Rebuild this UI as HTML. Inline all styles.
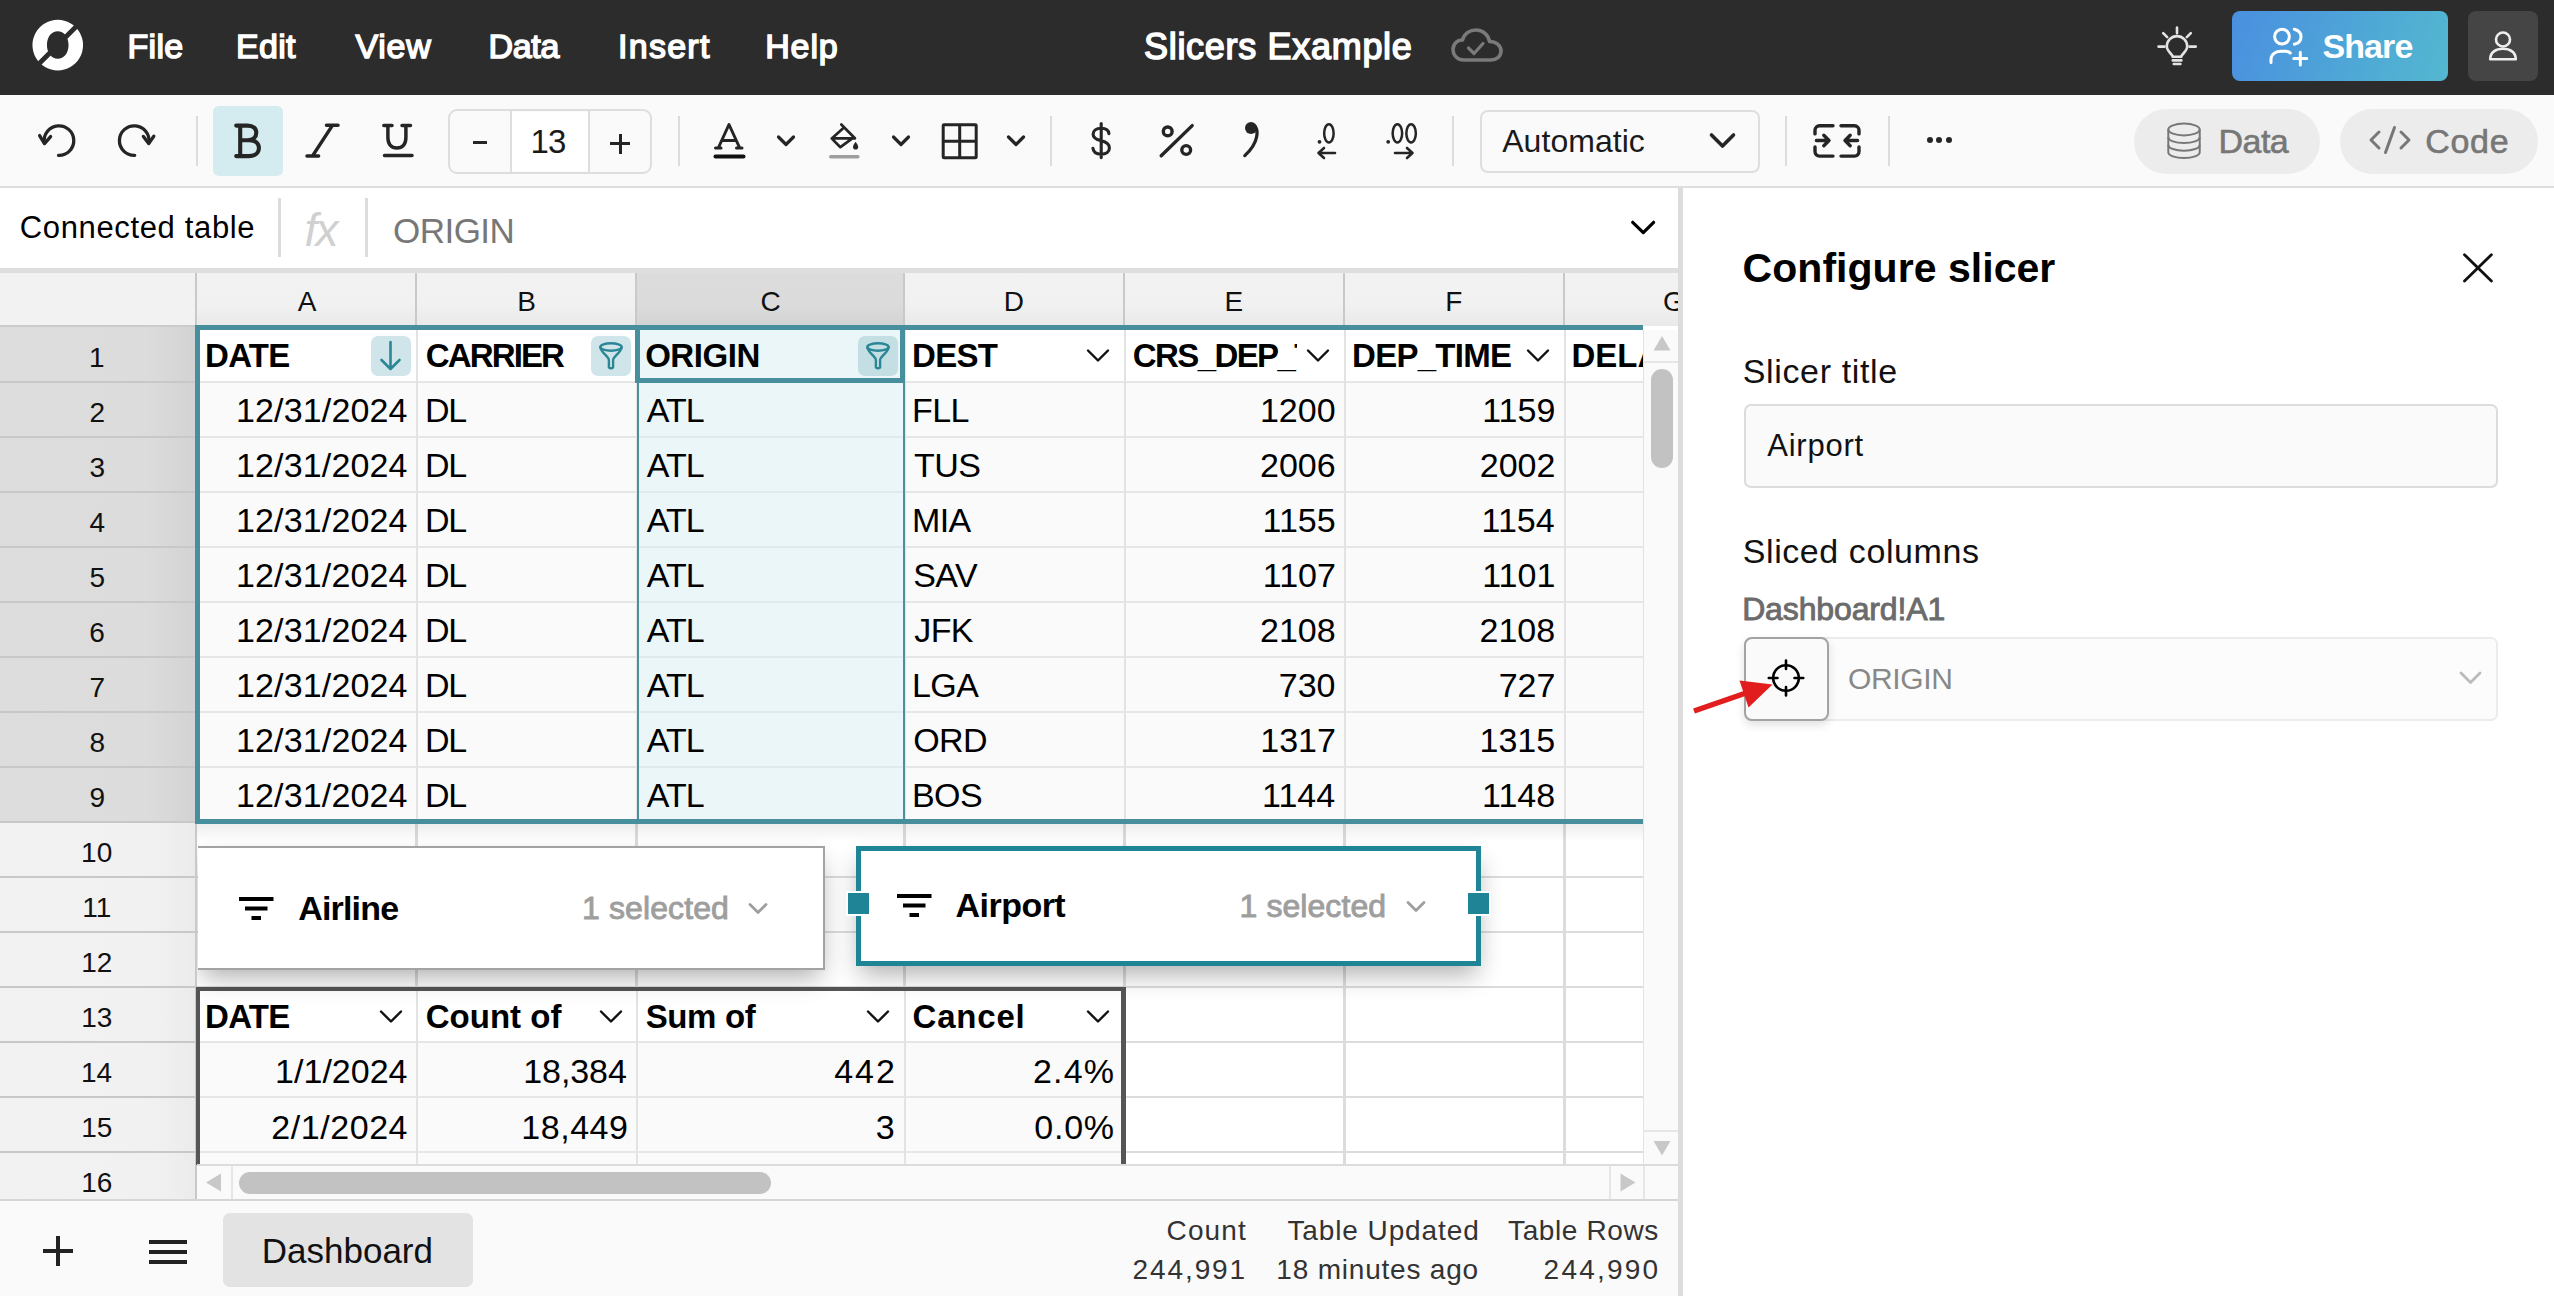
<!DOCTYPE html>
<html><head><meta charset="utf-8"><style>
html,body{margin:0;padding:0;}
body{width:2554px;height:1296px;overflow:hidden;position:relative;background:#fff;font-family:"Liberation Sans",sans-serif;}
body>div,body>svg{position:absolute;}
</style></head><body>
<div style="left:0px;top:0px;width:2554px;height:95px;background:#2c2c2c"></div>
<svg style="left:0px;top:0px;" width="100" height="95" viewBox="0 0 100 95"><path fill="#fff" fill-rule="evenodd" d="M57.75 19.8a25.3 25.3 0 1 0 0.01 0Z M57.75 31.2c-6.2 0-10.8 5.6-10.8 13.8s4.6 13.8 10.8 13.8 10.8-5.6 10.8-13.8-4.6-13.8-10.8-13.8Z"/><path d="M88 14.8 L27.5 75.3" stroke="#2c2c2c" stroke-width="4.8"/></svg>
<div style="left:127.46px;top:29.22px;font-size:34px;line-height:34px;font-weight:400;color:#fff;white-space:pre;letter-spacing:0.303px;-webkit-text-stroke:1.5px #fff;">File</div>
<div style="left:235.96px;top:29.22px;font-size:34px;line-height:34px;font-weight:400;color:#fff;white-space:pre;letter-spacing:0.315px;-webkit-text-stroke:1.5px #fff;">Edit</div>
<div style="left:355.61px;top:29.22px;font-size:34px;line-height:34px;font-weight:400;color:#fff;white-space:pre;letter-spacing:0.689px;-webkit-text-stroke:1.5px #fff;">View</div>
<div style="left:488.56px;top:29.22px;font-size:34px;line-height:34px;font-weight:400;color:#fff;white-space:pre;letter-spacing:-0.340px;-webkit-text-stroke:1.5px #fff;">Data</div>
<div style="left:618.02px;top:29.22px;font-size:34px;line-height:34px;font-weight:400;color:#fff;white-space:pre;letter-spacing:1.266px;-webkit-text-stroke:1.5px #fff;">Insert</div>
<div style="left:765.16px;top:29.22px;font-size:34px;line-height:34px;font-weight:400;color:#fff;white-space:pre;letter-spacing:0.893px;-webkit-text-stroke:1.5px #fff;">Help</div>
<div style="left:1144.03px;top:28.53px;font-size:36px;line-height:36px;font-weight:400;color:#fff;white-space:pre;letter-spacing:0.694px;-webkit-text-stroke:1.5px #fff;">Slicers Example</div>
<svg style="left:1450px;top:27px;" width="56" height="38" viewBox="0 0 56 38"><path d="M14 33 C6 33 3 27 3 22.5 C3 17 7 13 12.5 13 C14.5 6.5 20 3 26 3 C33 3 38.5 8 39.5 14.5 C46 14.5 51 18.5 51 24 C51 29.5 46.5 33 40.5 33 Z" fill="none" stroke="#7a7a7a" stroke-width="3.6" stroke-linejoin="round"/><path d="M18.5 21 L24 26.5 L33 16.5" fill="none" stroke="#7a7a7a" stroke-width="3.2" stroke-linecap="round" stroke-linejoin="round"/></svg>
<svg style="left:2155px;top:24px;" width="44" height="44" viewBox="0 0 44 44"><g fill="none" stroke="#e3e3e3" stroke-width="2.6" stroke-linecap="round" stroke-linejoin="round"><path d="M22 3.6 V9.2 M8.2 9.2 L12.2 13.2 M35.8 9.2 L31.8 13.2 M3.5 22.6 H9.5 M34.5 22.6 H40.8"/><path d="M17.8 32.8 C17.6 30.2 11.8 27.6 11.8 22.3 C11.8 16.6 16.4 12.1 22 12.1 C27.6 12.1 32.2 16.6 32.2 22.3 C32.2 27.6 26.4 30.2 26.2 32.8 Z"/><path d="M17.8 36.4 H26.4 M18.8 40 H25.4"/></g></svg>
<div style="left:2232px;top:11px;width:216px;height:70px;background:linear-gradient(110deg,#4a8fe0 0%,#4ea6d6 55%,#54b8d0 100%);border-radius:8px"></div>
<svg style="left:2267.5px;top:26px;" width="44" height="42" viewBox="0 0 44 42"><g fill="none" stroke="#fff" stroke-width="3" stroke-linecap="round"><circle cx="14" cy="10.6" r="7.4"/><path d="M26.3 3.2 C30.4 4.2 33 7 33 10.7 C33 14.4 30.4 17.3 26.3 18.2"/><path d="M3 36.6 V33.5 C3 28.5 7 25.3 12.5 25.3 H17.5 C19.5 25.3 21 25.9 22.3 27"/><path d="M32.3 26.2 V39 M25.8 32.6 H38.8"/></g></svg>
<div style="left:2322.41px;top:29.22px;font-size:34px;line-height:34px;font-weight:700;color:#fff;white-space:pre;letter-spacing:-0.886px;">Share</div>
<div style="left:2468px;top:11px;width:70px;height:70px;background:#454545;border-radius:8px"></div>
<svg style="left:2484px;top:28px;" width="38" height="36" viewBox="0 0 38 36"><g fill="none" stroke="#eee" stroke-width="2.6" stroke-linejoin="round"><circle cx="19" cy="11.5" r="7"/><path d="M6.2 31.2 C6.2 24.3 11.9 20.8 19 20.8 C26.1 20.8 31.8 24.3 31.8 31.2 Z"/></g></svg>
<div style="left:0px;top:95px;width:2554px;height:91px;background:#fafafa"></div>
<div style="left:0px;top:186px;width:2554px;height:2px;background:#dedede"></div>
<svg style="left:30px;top:115px;" width="140" height="50" viewBox="0 0 140 50"><g fill="none" stroke="#252525" stroke-width="3.3" stroke-linecap="round" stroke-linejoin="round"><path d="M28.5 40.4 A14.8 14.8 0 1 0 14.3 27.5"/><path d="M9.6 20.6 L14.5 28.6 L20.6 21.6"/><path d="M104.7 40.4 A14.8 14.8 0 1 1 118.9 27.5"/><path d="M113.4 21.4 L118.7 28.6 L123.8 21.2"/></g></svg>
<div style="left:196px;top:116px;width:2px;height:50px;background:#dcdcdc"></div>
<div style="left:213px;top:106px;width:70px;height:70px;background:#d4ebef;border-radius:6px"></div>
<svg style="left:225px;top:115px;" width="200" height="50" viewBox="0 0 200 50"><g fill="none" stroke="#252525" stroke-width="4.1" stroke-linecap="round" stroke-linejoin="round"><path d="M11.2 10.6 H22.5 C28.3 10.6 31.3 13.6 31.3 17.8 C31.3 22 28.3 25.2 22.5 25.2 H15.2 M15.2 10.6 V41.1 M11.2 41.1 H24 C30.3 41.1 33.9 37.6 33.9 33 C33.9 28.4 30.3 25.2 24 25.2 H15.2"/></g><g fill="none" stroke="#252525" stroke-width="3.5" stroke-linecap="round" stroke-linejoin="round"><path d="M101.5 10.3 H113 M107.3 10.6 L87.7 40.6 M82 40.9 H93.6"/><path d="M158.8 10.6 H167 M177 10.6 H185.5 M162.9 11 V22.5 C162.9 29.5 166.5 33 171.9 33 C177.3 33 180.9 29.5 180.9 22.5 V11 M159.5 40.6 H187"/></g></svg>
<div style="left:448px;top:109px;width:204px;height:65px;background:#fafafa;border:2px solid #dedede;border-radius:9px;box-sizing:border-box"></div>
<div style="left:511px;top:112px;width:78px;height:59px;background:#fff"></div>
<div style="left:510px;top:111px;width:2px;height:61px;background:#dedede"></div>
<div style="left:588px;top:111px;width:2px;height:61px;background:#dedede"></div>
<div style="left:473px;top:141px;width:14px;height:3px;background:#252525"></div>
<div style="left:530.49px;top:125.27px;font-size:33px;line-height:33px;font-weight:400;color:#1a1a1a;white-space:pre;letter-spacing:-0.769px;">13</div>
<div style="left:610px;top:142px;width:20px;height:3px;background:#252525"></div>
<div style="left:618.5px;top:133.5px;width:3px;height:20px;background:#252525"></div>
<div style="left:678px;top:116px;width:2px;height:50px;background:#dcdcdc"></div>
<svg style="left:710px;top:120px;" width="40" height="42" viewBox="0 0 40 42"><g fill="none" stroke="#252525" stroke-width="3" stroke-linecap="round" stroke-linejoin="round"><path d="M8.5 27.5 L19 4.5 L29.5 27.5 M12 20.5 H26 M5.5 28 H11 M26.5 28 H32"/></g><rect x="3.5" y="34.5" width="32" height="4" rx="2" fill="#111"/></svg>
<svg style="left:775.5px;top:134px;" width="20" height="15" viewBox="0 0 20 15"><path d="M2.5 3 L10 10.5 L17.5 3" fill="none" stroke="#252525" stroke-width="3.2" stroke-linecap="round" stroke-linejoin="round"/></svg>
<svg style="left:826px;top:120px;" width="38" height="42" viewBox="0 0 38 42"><g fill="none" stroke="#252525" stroke-width="2.7" stroke-linejoin="round" stroke-linecap="round"><path d="M15.3 4.5 L28.9 18.3 M16.6 8.8 L5.8 18.6 L14.4 27.2 L26 18.6 M5.8 18.4 H28.9"/></g><path d="M29.6 21.8 C31 23.8 32.2 25.6 32.2 26.9 C32.2 28.5 31 29.5 29.6 29.5 C28.2 29.5 27 28.5 27 26.9 C27 25.6 28.2 23.8 29.6 21.8Z" fill="#252525"/><rect x="3" y="35" width="30.6" height="3.6" rx="1.8" fill="#9e9e9e"/></svg>
<svg style="left:890.5px;top:134px;" width="20" height="15" viewBox="0 0 20 15"><path d="M2.5 3 L10 10.5 L17.5 3" fill="none" stroke="#252525" stroke-width="3.2" stroke-linecap="round" stroke-linejoin="round"/></svg>
<svg style="left:939px;top:120px;" width="42" height="40" viewBox="0 0 42 40"><g fill="none" stroke="#252525" stroke-width="3" stroke-linejoin="round"><rect x="4.2" y="4.8" width="33" height="33" rx="0.8"/><path d="M20.7 4.8 V37.8 M4.2 21.3 H37.2"/></g></svg>
<svg style="left:1005.5px;top:134px;" width="20" height="15" viewBox="0 0 20 15"><path d="M2.5 3 L10 10.5 L17.5 3" fill="none" stroke="#252525" stroke-width="3.2" stroke-linecap="round" stroke-linejoin="round"/></svg>
<div style="left:1050px;top:116px;width:2px;height:50px;background:#dcdcdc"></div>
<svg style="left:1085px;top:118px;" width="34" height="44" viewBox="0 0 34 44"><g fill="none" stroke="#252525" stroke-width="3.1" stroke-linecap="round" stroke-linejoin="round"><path d="M16.2 5.6 V39.6 M23.9 15.6 C23.6 12 20.8 10.2 16.2 10.2 C11.2 10.2 8.1 12.6 8.1 16.3 C8.1 20.3 11.6 21.7 16.2 22.8 C21 23.9 24.4 25.8 24.4 30 C24.4 33.8 21.3 36.2 16.2 36.2 C11.4 36.2 8.3 34.2 7.9 30.2"/></g></svg>
<svg style="left:1158px;top:120px;" width="40" height="40" viewBox="0 0 40 40"><g fill="none" stroke="#252525" stroke-width="3.4" stroke-linecap="round"><path d="M3.2 35.8 L34.2 5.6"/><circle cx="9.7" cy="11.4" r="4.4"/><circle cx="28.2" cy="30" r="4.4"/></g></svg>
<svg style="left:1240px;top:120px;" width="22" height="40" viewBox="0 0 22 40"><path d="M15.2 6.5 C17.5 9.5 17.4 13 16.6 17 C15.3 23.5 11.5 29.5 4.8 35.6" fill="none" stroke="#252525" stroke-width="3.3" stroke-linecap="round"/><circle cx="11" cy="8.1" r="6" fill="#252525"/></svg>
<svg style="left:1314px;top:120px;" width="28" height="42" viewBox="0 0 28 42"><ellipse cx="14.9" cy="13.3" rx="4.75" ry="9.1" fill="none" stroke="#252525" stroke-width="2.5"/><circle cx="5.5" cy="21.8" r="1.9" fill="#252525"/><g fill="none" stroke="#252525" stroke-width="2.6" stroke-linecap="round" stroke-linejoin="round"><path d="M4.5 33 H21 M10 28 L4.5 33 L10 38"/></g></svg>
<svg style="left:1384px;top:120px;" width="38" height="42" viewBox="0 0 38 42"><ellipse cx="13.4" cy="13.3" rx="4.75" ry="9.1" fill="none" stroke="#252525" stroke-width="2.5"/><ellipse cx="27.1" cy="13.3" rx="4.75" ry="9.1" fill="none" stroke="#252525" stroke-width="2.5"/><circle cx="4.2" cy="21.8" r="1.9" fill="#252525"/><g fill="none" stroke="#252525" stroke-width="2.6" stroke-linecap="round" stroke-linejoin="round"><path d="M11 33 H28.5 M23 28 L28.5 33 L23 38"/></g></svg>
<div style="left:1452px;top:116px;width:2px;height:50px;background:#dcdcdc"></div>
<div style="left:1480px;top:110px;width:280px;height:63px;background:#fafafa;border:2px solid #dedede;border-radius:8px;box-sizing:border-box"></div>
<div style="left:1502.24px;top:124.91px;font-size:32px;line-height:32px;font-weight:400;color:#1a1a1a;white-space:pre;letter-spacing:0.041px;">Automatic</div>
<svg style="left:1708px;top:131px;" width="30" height="22" viewBox="0 0 30 22"><path d="M3.5 4 L14.5 15 L25.5 4" fill="none" stroke="#252525" stroke-width="3.6" stroke-linecap="round" stroke-linejoin="round"/></svg>
<div style="left:1785px;top:116px;width:2px;height:50px;background:#dcdcdc"></div>
<svg style="left:1810px;top:121px;" width="54" height="40" viewBox="0 0 54 40"><g fill="none" stroke="#252525" stroke-width="3.4" stroke-linecap="round" stroke-linejoin="round"><path d="M23 4.8 H9.5 C7 4.8 5 6.8 5 9.3 V12.9 M5 26 V30.6 C5 33.1 7 35.1 9.5 35.1 H23"/><path d="M31 4.8 H44.5 C47 4.8 49 6.8 49 9.3 V12.9 M49 26 V30.6 C49 33.1 47 35.1 44.5 35.1 H31"/><path d="M6.4 19.5 H18.8 M13.8 14.2 L19 19.5 L13.8 24.8"/><path d="M47.6 19.5 H35.2 M40.2 14.2 L35 19.5 L40.2 24.8"/></g></svg>
<div style="left:1888px;top:116px;width:2px;height:50px;background:#dcdcdc"></div>
<div style="left:1927.2px;top:137.4px;width:6px;height:6px;background:#252525;border-radius:50%"></div>
<div style="left:1936.4px;top:137.4px;width:6px;height:6px;background:#252525;border-radius:50%"></div>
<div style="left:1945.7px;top:137.4px;width:6px;height:6px;background:#252525;border-radius:50%"></div>
<div style="left:2134px;top:109px;width:186px;height:65px;background:#ececec;border-radius:33px"></div>
<svg style="left:2164px;top:120px;" width="40" height="42" viewBox="0 0 40 42"><g fill="none" stroke="#777" stroke-width="2"><ellipse cx="20" cy="9.5" rx="15.7" ry="5.9"/><path d="M4.3 9.5 V32.2 C4.3 35.5 11.3 38 20 38 C28.7 38 35.7 35.5 35.7 32.2 V9.5"/><path d="M4.3 17.2 C4.3 20.5 11.3 23 20 23 C28.7 23 35.7 20.5 35.7 17.2"/><path d="M4.3 24.9 C4.3 28.2 11.3 30.7 20 30.7 C28.7 30.7 35.7 28.2 35.7 24.9"/></g></svg>
<div style="left:2218.51px;top:124.02px;font-size:34px;line-height:34px;font-weight:400;color:#777;white-space:pre;letter-spacing:-0.540px;-webkit-text-stroke:0.6px #777;">Data</div>
<div style="left:2340px;top:109px;width:198px;height:65px;background:#ececec;border-radius:33px"></div>
<svg style="left:2367px;top:124px;" width="46" height="32" viewBox="0 0 46 32"><g fill="none" stroke="#777" stroke-width="3" stroke-linecap="round" stroke-linejoin="round"><path d="M12 8 L4 16 L12 24 M34 8 L42 16 L34 24 M27.5 3.5 L18.5 28.5"/></g></svg>
<div style="left:2425.30px;top:124.02px;font-size:34px;line-height:34px;font-weight:400;color:#777;white-space:pre;letter-spacing:0.679px;-webkit-text-stroke:0.6px #777;">Code</div>
<div style="left:0px;top:188px;width:1679px;height:80px;background:#fff"></div><div style="left:0px;top:268px;width:1679px;height:5px;background:#dedede"></div><div style="left:19.75px;top:212.46px;font-size:31px;line-height:31px;font-weight:400;color:#000;white-space:pre;letter-spacing:0.646px;">Connected table</div><div style="left:278px;top:198px;width:3px;height:59px;background:#dcdcdc"></div><div style="left:304.38px;top:207.06px;font-size:46px;line-height:46px;font-weight:400;color:#d0d0d0;white-space:pre;letter-spacing:-1.704px;font-style:italic;">fx</div><div style="left:365px;top:198px;width:3px;height:59px;background:#dcdcdc"></div><div style="left:392.96px;top:213.47px;font-size:35px;line-height:35px;font-weight:400;color:#777;white-space:pre;letter-spacing:-0.509px;">ORIGIN</div><svg style="left:1629px;top:218px;" width="30" height="20" viewBox="0 0 30 20"><path d="M3.7 4.3 L14.3 14.6 L24.6 4.3" fill="none" stroke="#000" stroke-width="3.2" stroke-linecap="round" stroke-linejoin="round"/></svg><div style="left:0px;top:273px;width:1679px;height:53px;background:linear-gradient(#f2f2f2 0%,#f1f1f1 60%,#e9e9e9 100%)"></div><div style="left:637px;top:273px;width:266px;height:53px;background:linear-gradient(#dcdcdc 0%,#dbdbdb 60%,#d3d3d3 100%)"></div><div style="left:0px;top:273px;width:195px;height:53px;background:#f2f2f2"></div><div style="left:195px;top:273px;width:2px;height:53px;background:#c9c9c9"></div><div style="left:415px;top:273px;width:2px;height:53px;background:#c9c9c9"></div><div style="left:635px;top:273px;width:2px;height:53px;background:#c9c9c9"></div><div style="left:903px;top:273px;width:2px;height:53px;background:#c9c9c9"></div><div style="left:1123px;top:273px;width:2px;height:53px;background:#c9c9c9"></div><div style="left:1343px;top:273px;width:2px;height:53px;background:#c9c9c9"></div><div style="left:1563px;top:273px;width:2px;height:53px;background:#c9c9c9"></div><div style="left:0px;top:325px;width:197px;height:2px;background:#cbcbcb"></div><div style="left:297.66px;top:288.00px;font-size:28px;line-height:28px;font-weight:400;color:#111;white-space:pre;letter-spacing:0.000px;">A</div><div style="left:517.24px;top:288.00px;font-size:28px;line-height:28px;font-weight:400;color:#111;white-space:pre;letter-spacing:0.000px;">B</div><div style="left:760.42px;top:288.00px;font-size:28px;line-height:28px;font-weight:400;color:#111;white-space:pre;letter-spacing:0.000px;">C</div><div style="left:1003.70px;top:288.00px;font-size:28px;line-height:28px;font-weight:400;color:#111;white-space:pre;letter-spacing:0.000px;">D</div><div style="left:1224.62px;top:288.00px;font-size:28px;line-height:28px;font-weight:400;color:#111;white-space:pre;letter-spacing:0.000px;">E</div><div style="left:1445.16px;top:288.00px;font-size:28px;line-height:28px;font-weight:400;color:#111;white-space:pre;letter-spacing:0.000px;">F</div><div style="left:1663.00px;top:288.00px;font-size:28px;line-height:28px;font-weight:400;color:#111;white-space:pre;letter-spacing:0.000px;">G</div><div style="left:0px;top:327px;width:195px;height:496px;background:linear-gradient(90deg,#dddddd 0%,#dcdcdc 75%,#d3d3d3 100%)"></div><div style="left:0px;top:823px;width:195px;height:377px;background:linear-gradient(90deg,#f2f2f2 0%,#f1f1f1 80%,#ebebeb 100%)"></div><div style="left:0px;top:380.5px;width:195px;height:2.5px;background:#c8c8c8"></div><div style="left:0px;top:435.5px;width:195px;height:2.5px;background:#c8c8c8"></div><div style="left:0px;top:490.5px;width:195px;height:2.5px;background:#c8c8c8"></div><div style="left:0px;top:545.5px;width:195px;height:2.5px;background:#c8c8c8"></div><div style="left:0px;top:600.5px;width:195px;height:2.5px;background:#c8c8c8"></div><div style="left:0px;top:655.5px;width:195px;height:2.5px;background:#c8c8c8"></div><div style="left:0px;top:710.5px;width:195px;height:2.5px;background:#c8c8c8"></div><div style="left:0px;top:765.5px;width:195px;height:2.5px;background:#c8c8c8"></div><div style="left:0px;top:820.5px;width:195px;height:2.5px;background:#c8c8c8"></div><div style="left:0px;top:875.5px;width:195px;height:2.5px;background:#c8c8c8"></div><div style="left:0px;top:930.5px;width:195px;height:2.5px;background:#c8c8c8"></div><div style="left:0px;top:985.5px;width:195px;height:2.5px;background:#c8c8c8"></div><div style="left:0px;top:1040.5px;width:195px;height:2.5px;background:#c8c8c8"></div><div style="left:0px;top:1095.5px;width:195px;height:2.5px;background:#c8c8c8"></div><div style="left:0px;top:1150.5px;width:195px;height:2.5px;background:#c8c8c8"></div><div style="left:195px;top:327px;width:2px;height:873px;background:#c9c9c9"></div><div style="left:89.02px;top:344.00px;font-size:28px;line-height:28px;font-weight:400;color:#111;white-space:pre;letter-spacing:0.000px;">1</div><div style="left:89.42px;top:399.00px;font-size:28px;line-height:28px;font-weight:400;color:#111;white-space:pre;letter-spacing:0.000px;">2</div><div style="left:89.49px;top:454.00px;font-size:28px;line-height:28px;font-weight:400;color:#111;white-space:pre;letter-spacing:0.000px;">3</div><div style="left:89.50px;top:509.00px;font-size:28px;line-height:28px;font-weight:400;color:#111;white-space:pre;letter-spacing:0.000px;">4</div><div style="left:89.44px;top:564.00px;font-size:28px;line-height:28px;font-weight:400;color:#111;white-space:pre;letter-spacing:0.000px;">5</div><div style="left:89.32px;top:619.00px;font-size:28px;line-height:28px;font-weight:400;color:#111;white-space:pre;letter-spacing:0.000px;">6</div><div style="left:89.40px;top:674.00px;font-size:28px;line-height:28px;font-weight:400;color:#111;white-space:pre;letter-spacing:0.000px;">7</div><div style="left:89.42px;top:729.00px;font-size:28px;line-height:28px;font-weight:400;color:#111;white-space:pre;letter-spacing:0.000px;">8</div><div style="left:89.42px;top:784.00px;font-size:28px;line-height:28px;font-weight:400;color:#111;white-space:pre;letter-spacing:0.000px;">9</div><div style="left:81.11px;top:839.00px;font-size:28px;line-height:28px;font-weight:400;color:#111;white-space:pre;letter-spacing:0.000px;">10</div><div style="left:82.28px;top:894.00px;font-size:28px;line-height:28px;font-weight:400;color:#111;white-space:pre;letter-spacing:0.000px;">11</div><div style="left:81.27px;top:949.00px;font-size:28px;line-height:28px;font-weight:400;color:#111;white-space:pre;letter-spacing:0.000px;">12</div><div style="left:81.17px;top:1004.00px;font-size:28px;line-height:28px;font-weight:400;color:#111;white-space:pre;letter-spacing:0.000px;">13</div><div style="left:80.97px;top:1059.00px;font-size:28px;line-height:28px;font-weight:400;color:#111;white-space:pre;letter-spacing:0.000px;">14</div><div style="left:81.16px;top:1114.00px;font-size:28px;line-height:28px;font-weight:400;color:#111;white-space:pre;letter-spacing:0.000px;">15</div><div style="left:81.17px;top:1169.00px;font-size:28px;line-height:28px;font-weight:400;color:#111;white-space:pre;letter-spacing:0.000px;">16</div><div style="left:197px;top:327px;width:1446px;height:838px;background:#fff"></div><div style="left:197px;top:820.5px;width:1446px;height:2.5px;background:#dcdcdc"></div><div style="left:197px;top:875.5px;width:1446px;height:2.5px;background:#dcdcdc"></div><div style="left:197px;top:930.5px;width:1446px;height:2.5px;background:#dcdcdc"></div><div style="left:197px;top:985.5px;width:1446px;height:2.5px;background:#dcdcdc"></div><div style="left:197px;top:1040.5px;width:1446px;height:2.5px;background:#dcdcdc"></div><div style="left:197px;top:1095.5px;width:1446px;height:2.5px;background:#dcdcdc"></div><div style="left:197px;top:1150.5px;width:1446px;height:2.5px;background:#dcdcdc"></div><div style="left:415px;top:823px;width:2.5px;height:342px;background:#dcdcdc"></div><div style="left:635px;top:823px;width:2.5px;height:342px;background:#dcdcdc"></div><div style="left:903px;top:823px;width:2.5px;height:342px;background:#dcdcdc"></div><div style="left:1123px;top:823px;width:2.5px;height:342px;background:#dcdcdc"></div><div style="left:1343px;top:823px;width:2.5px;height:342px;background:#dcdcdc"></div><div style="left:1563px;top:823px;width:2.5px;height:342px;background:#dcdcdc"></div><div style="left:200px;top:330px;width:1443px;height:51px;background:#fff"></div><div style="left:200px;top:382px;width:1443px;height:437px;background:#fafafa"></div><div style="left:200px;top:380.5px;width:1443px;height:2px;background:#e6e6e6"></div><div style="left:200px;top:435.5px;width:1443px;height:2px;background:#e6e6e6"></div><div style="left:200px;top:490.5px;width:1443px;height:2px;background:#e6e6e6"></div><div style="left:200px;top:545.5px;width:1443px;height:2px;background:#e6e6e6"></div><div style="left:200px;top:600.5px;width:1443px;height:2px;background:#e6e6e6"></div><div style="left:200px;top:655.5px;width:1443px;height:2px;background:#e6e6e6"></div><div style="left:200px;top:710.5px;width:1443px;height:2px;background:#e6e6e6"></div><div style="left:200px;top:765.5px;width:1443px;height:2px;background:#e6e6e6"></div><div style="left:415.5px;top:330px;width:2px;height:489px;background:#e3e3e3"></div><div style="left:635.5px;top:330px;width:2px;height:489px;background:#e3e3e3"></div><div style="left:903.5px;top:330px;width:2px;height:489px;background:#e3e3e3"></div><div style="left:1123.5px;top:330px;width:2px;height:489px;background:#e3e3e3"></div><div style="left:1343.5px;top:330px;width:2px;height:489px;background:#e3e3e3"></div><div style="left:1563.5px;top:330px;width:2px;height:489px;background:#e3e3e3"></div><div style="left:637px;top:330px;width:267px;height:489px;background:#eaf6f8"></div><div style="left:637px;top:382px;width:2px;height:437px;background:#4a919d"></div><div style="left:902.5px;top:382px;width:2px;height:437px;background:#4a919d"></div><div style="left:639px;top:435.5px;width:263.5px;height:2px;background:#dfeaec"></div><div style="left:639px;top:490.5px;width:263.5px;height:2px;background:#dfeaec"></div><div style="left:639px;top:545.5px;width:263.5px;height:2px;background:#dfeaec"></div><div style="left:639px;top:600.5px;width:263.5px;height:2px;background:#dfeaec"></div><div style="left:639px;top:655.5px;width:263.5px;height:2px;background:#dfeaec"></div><div style="left:639px;top:710.5px;width:263.5px;height:2px;background:#dfeaec"></div><div style="left:639px;top:765.5px;width:263.5px;height:2px;background:#dfeaec"></div><div style="left:197px;top:823.5px;width:1446px;height:18px;background:linear-gradient(rgba(0,0,0,0.07),rgba(0,0,0,0))"></div><div style="left:195px;top:325px;width:1448px;height:5.3px;background:#478f9c"></div><div style="left:195px;top:818.5px;width:1448px;height:5px;background:#478f9c"></div><div style="left:195px;top:325px;width:5px;height:498.5px;background:#478f9c"></div><div style="left:635.3px;top:325px;width:269.7px;height:57.6px;border:5px solid #478f9c;box-sizing:border-box"></div><div style="left:205.09px;top:339.27px;font-size:33px;line-height:33px;font-weight:700;color:#000;white-space:pre;letter-spacing:-0.729px;">DATE</div><div style="left:425.75px;top:339.27px;font-size:33px;line-height:33px;font-weight:700;color:#000;white-space:pre;letter-spacing:-1.856px;">CARRIER</div><div style="left:645.15px;top:339.27px;font-size:33px;line-height:33px;font-weight:700;color:#000;white-space:pre;letter-spacing:-0.450px;">ORIGIN</div><div style="left:911.99px;top:339.27px;font-size:33px;line-height:33px;font-weight:700;color:#000;white-space:pre;letter-spacing:-0.679px;">DEST</div><div style="left:1132.75px;top:339.27px;font-size:33px;line-height:33px;font-weight:700;color:#000;white-space:pre;letter-spacing:-1.583px;width:164.25px;overflow:hidden;">CRS_DEP_T</div><div style="left:1352.09px;top:339.27px;font-size:33px;line-height:33px;font-weight:700;color:#000;white-space:pre;letter-spacing:-0.734px;">DEP_TIME</div><div style="left:1571.49px;top:339.27px;font-size:33px;line-height:33px;font-weight:700;color:#000;white-space:pre;letter-spacing:0.000px;">DELAY</div><div style="left:371px;top:335.5px;width:40px;height:40px;background:#cfe5ea;border-radius:7px"></div><svg style="left:371px;top:335.5px;" width="40" height="40" viewBox="0 0 40 40"><g fill="none" stroke="#2b8696" stroke-width="2.6" stroke-linecap="round" stroke-linejoin="round"><path d="M19.5 6 V33 M10.5 24 L19.5 33 L28.5 24"/></g></svg><div style="left:591px;top:335.5px;width:40px;height:40px;background:#cfe5ea;border-radius:7px"></div><svg style="left:591px;top:335.5px;" width="40" height="40" viewBox="0 0 40 40"><g fill="none" stroke="#2b8696" stroke-width="2.4" stroke-linecap="round" stroke-linejoin="round"><ellipse cx="20" cy="11" rx="10.6" ry="3.7"/><path d="M9.4 11.3 C10 16.8 17.9 20.5 17.9 24 V31 C17.9 32.6 22.1 32.6 22.1 31 V24 C22.1 20.5 30 16.8 30.6 11.3"/></g></svg><div style="left:858px;top:335.5px;width:40px;height:40px;background:#c3dfe4;border-radius:7px"></div><svg style="left:858px;top:335.5px;" width="40" height="40" viewBox="0 0 40 40"><g fill="none" stroke="#2b8696" stroke-width="2.4" stroke-linecap="round" stroke-linejoin="round"><ellipse cx="20" cy="11" rx="10.6" ry="3.7"/><path d="M9.4 11.3 C10 16.8 17.9 20.5 17.9 24 V31 C17.9 32.6 22.1 32.6 22.1 31 V24 C22.1 20.5 30 16.8 30.6 11.3"/></g></svg><svg style="left:1086px;top:348px;" width="24" height="16" viewBox="0 0 24 16"><path d="M2 2.5 L12 12.5 L22 2.5" fill="none" stroke="#111" stroke-width="2.4" stroke-linecap="round" stroke-linejoin="round"/></svg><svg style="left:1306px;top:348px;" width="24" height="16" viewBox="0 0 24 16"><path d="M2 2.5 L12 12.5 L22 2.5" fill="none" stroke="#111" stroke-width="2.4" stroke-linecap="round" stroke-linejoin="round"/></svg><svg style="left:1526px;top:348px;" width="24" height="16" viewBox="0 0 24 16"><path d="M2 2.5 L12 12.5 L22 2.5" fill="none" stroke="#111" stroke-width="2.4" stroke-linecap="round" stroke-linejoin="round"/></svg><div style="left:236.02px;top:393.42px;font-size:34px;line-height:34px;font-weight:400;color:#000;white-space:pre;letter-spacing:0.144px;">12/31/2024</div><div style="left:424.91px;top:393.42px;font-size:34px;line-height:34px;font-weight:400;color:#000;white-space:pre;letter-spacing:-1.242px;">DL</div><div style="left:646.83px;top:393.42px;font-size:34px;line-height:34px;font-weight:400;color:#000;white-space:pre;letter-spacing:-1.025px;">ATL</div><div style="left:912.01px;top:393.42px;font-size:34px;line-height:34px;font-weight:400;color:#000;white-space:pre;letter-spacing:-0.600px;">FLL</div><div style="left:1259.91px;top:393.42px;font-size:34px;line-height:34px;font-weight:400;color:#000;white-space:pre;letter-spacing:0.000px;">1200</div><div style="left:1482.20px;top:393.42px;font-size:34px;line-height:34px;font-weight:400;color:#000;white-space:pre;letter-spacing:0.000px;">1159</div><div style="left:236.02px;top:448.42px;font-size:34px;line-height:34px;font-weight:400;color:#000;white-space:pre;letter-spacing:0.144px;">12/31/2024</div><div style="left:424.91px;top:448.42px;font-size:34px;line-height:34px;font-weight:400;color:#000;white-space:pre;letter-spacing:-1.242px;">DL</div><div style="left:646.83px;top:448.42px;font-size:34px;line-height:34px;font-weight:400;color:#000;white-space:pre;letter-spacing:-1.025px;">ATL</div><div style="left:914.05px;top:448.42px;font-size:34px;line-height:34px;font-weight:400;color:#000;white-space:pre;letter-spacing:-0.600px;">TUS</div><div style="left:1260.05px;top:448.42px;font-size:34px;line-height:34px;font-weight:400;color:#000;white-space:pre;letter-spacing:0.000px;">2006</div><div style="left:1479.78px;top:448.42px;font-size:34px;line-height:34px;font-weight:400;color:#000;white-space:pre;letter-spacing:0.000px;">2002</div><div style="left:236.02px;top:503.42px;font-size:34px;line-height:34px;font-weight:400;color:#000;white-space:pre;letter-spacing:0.144px;">12/31/2024</div><div style="left:424.91px;top:503.42px;font-size:34px;line-height:34px;font-weight:400;color:#000;white-space:pre;letter-spacing:-1.242px;">DL</div><div style="left:646.83px;top:503.42px;font-size:34px;line-height:34px;font-weight:400;color:#000;white-space:pre;letter-spacing:-1.025px;">ATL</div><div style="left:912.01px;top:503.42px;font-size:34px;line-height:34px;font-weight:400;color:#000;white-space:pre;letter-spacing:-0.600px;">MIA</div><div style="left:1262.53px;top:503.42px;font-size:34px;line-height:34px;font-weight:400;color:#000;white-space:pre;letter-spacing:0.000px;">1155</div><div style="left:1481.59px;top:503.42px;font-size:34px;line-height:34px;font-weight:400;color:#000;white-space:pre;letter-spacing:0.000px;">1154</div><div style="left:236.02px;top:558.42px;font-size:34px;line-height:34px;font-weight:400;color:#000;white-space:pre;letter-spacing:0.144px;">12/31/2024</div><div style="left:424.91px;top:558.42px;font-size:34px;line-height:34px;font-weight:400;color:#000;white-space:pre;letter-spacing:-1.242px;">DL</div><div style="left:646.83px;top:558.42px;font-size:34px;line-height:34px;font-weight:400;color:#000;white-space:pre;letter-spacing:-1.025px;">ATL</div><div style="left:913.27px;top:558.42px;font-size:34px;line-height:34px;font-weight:400;color:#000;white-space:pre;letter-spacing:-0.600px;">SAV</div><div style="left:1262.80px;top:558.42px;font-size:34px;line-height:34px;font-weight:400;color:#000;white-space:pre;letter-spacing:0.000px;">1107</div><div style="left:1482.23px;top:558.42px;font-size:34px;line-height:34px;font-weight:400;color:#000;white-space:pre;letter-spacing:0.000px;">1101</div><div style="left:236.02px;top:613.42px;font-size:34px;line-height:34px;font-weight:400;color:#000;white-space:pre;letter-spacing:0.144px;">12/31/2024</div><div style="left:424.91px;top:613.42px;font-size:34px;line-height:34px;font-weight:400;color:#000;white-space:pre;letter-spacing:-1.242px;">DL</div><div style="left:646.83px;top:613.42px;font-size:34px;line-height:34px;font-weight:400;color:#000;white-space:pre;letter-spacing:-1.025px;">ATL</div><div style="left:914.29px;top:613.42px;font-size:34px;line-height:34px;font-weight:400;color:#000;white-space:pre;letter-spacing:-0.600px;">JFK</div><div style="left:1260.05px;top:613.42px;font-size:34px;line-height:34px;font-weight:400;color:#000;white-space:pre;letter-spacing:0.000px;">2108</div><div style="left:1479.55px;top:613.42px;font-size:34px;line-height:34px;font-weight:400;color:#000;white-space:pre;letter-spacing:0.000px;">2108</div><div style="left:236.02px;top:668.42px;font-size:34px;line-height:34px;font-weight:400;color:#000;white-space:pre;letter-spacing:0.144px;">12/31/2024</div><div style="left:424.91px;top:668.42px;font-size:34px;line-height:34px;font-weight:400;color:#000;white-space:pre;letter-spacing:-1.242px;">DL</div><div style="left:646.83px;top:668.42px;font-size:34px;line-height:34px;font-weight:400;color:#000;white-space:pre;letter-spacing:-1.025px;">ATL</div><div style="left:912.01px;top:668.42px;font-size:34px;line-height:34px;font-weight:400;color:#000;white-space:pre;letter-spacing:-0.600px;">LGA</div><div style="left:1278.81px;top:668.42px;font-size:34px;line-height:34px;font-weight:400;color:#000;white-space:pre;letter-spacing:0.000px;">730</div><div style="left:1498.69px;top:668.42px;font-size:34px;line-height:34px;font-weight:400;color:#000;white-space:pre;letter-spacing:0.000px;">727</div><div style="left:236.02px;top:723.42px;font-size:34px;line-height:34px;font-weight:400;color:#000;white-space:pre;letter-spacing:0.144px;">12/31/2024</div><div style="left:424.91px;top:723.42px;font-size:34px;line-height:34px;font-weight:400;color:#000;white-space:pre;letter-spacing:-1.242px;">DL</div><div style="left:646.83px;top:723.42px;font-size:34px;line-height:34px;font-weight:400;color:#000;white-space:pre;letter-spacing:-1.025px;">ATL</div><div style="left:913.20px;top:723.42px;font-size:34px;line-height:34px;font-weight:400;color:#000;white-space:pre;letter-spacing:-0.600px;">ORD</div><div style="left:1260.28px;top:723.42px;font-size:34px;line-height:34px;font-weight:400;color:#000;white-space:pre;letter-spacing:0.000px;">1317</div><div style="left:1479.51px;top:723.42px;font-size:34px;line-height:34px;font-weight:400;color:#000;white-space:pre;letter-spacing:0.000px;">1315</div><div style="left:236.02px;top:778.42px;font-size:34px;line-height:34px;font-weight:400;color:#000;white-space:pre;letter-spacing:0.144px;">12/31/2024</div><div style="left:424.91px;top:778.42px;font-size:34px;line-height:34px;font-weight:400;color:#000;white-space:pre;letter-spacing:-1.242px;">DL</div><div style="left:646.83px;top:778.42px;font-size:34px;line-height:34px;font-weight:400;color:#000;white-space:pre;letter-spacing:-1.025px;">ATL</div><div style="left:912.01px;top:778.42px;font-size:34px;line-height:34px;font-weight:400;color:#000;white-space:pre;letter-spacing:-0.600px;">BOS</div><div style="left:1262.09px;top:778.42px;font-size:34px;line-height:34px;font-weight:400;color:#000;white-space:pre;letter-spacing:0.000px;">1144</div><div style="left:1482.06px;top:778.42px;font-size:34px;line-height:34px;font-weight:400;color:#000;white-space:pre;letter-spacing:0.000px;">1148</div><div style="left:200px;top:991px;width:923px;height:50px;background:#fff"></div><div style="left:200px;top:1043px;width:923px;height:122px;background:#fafafa"></div><div style="left:200px;top:1040.5px;width:923px;height:2px;background:#e6e6e6"></div><div style="left:200px;top:1095.5px;width:923px;height:2px;background:#e6e6e6"></div><div style="left:200px;top:1150.5px;width:923px;height:2px;background:#e6e6e6"></div><div style="left:415.5px;top:991px;width:2px;height:174px;background:#e3e3e3"></div><div style="left:635.5px;top:991px;width:2px;height:174px;background:#e3e3e3"></div><div style="left:903.5px;top:991px;width:2px;height:174px;background:#e3e3e3"></div><div style="left:195.5px;top:986.5px;width:930px;height:4.5px;background:#555"></div><div style="left:195.5px;top:986.5px;width:4.5px;height:178.5px;background:#555"></div><div style="left:1121px;top:986.5px;width:4.5px;height:178.5px;background:#555"></div><div style="left:205.09px;top:1000.07px;font-size:33px;line-height:33px;font-weight:700;color:#000;white-space:pre;letter-spacing:-0.729px;">DATE</div><div style="left:425.75px;top:1000.07px;font-size:33px;line-height:33px;font-weight:700;color:#000;white-space:pre;letter-spacing:0.013px;">Count of</div><div style="left:645.64px;top:1000.07px;font-size:33px;line-height:33px;font-weight:700;color:#000;white-space:pre;letter-spacing:-0.349px;">Sum of</div><div style="left:912.55px;top:1000.07px;font-size:33px;line-height:33px;font-weight:700;color:#000;white-space:pre;letter-spacing:0.798px;">Cancel</div><svg style="left:379px;top:1009px;" width="24" height="16" viewBox="0 0 24 16"><path d="M2 2.5 L12 12.5 L22 2.5" fill="none" stroke="#111" stroke-width="2.4" stroke-linecap="round" stroke-linejoin="round"/></svg><svg style="left:599px;top:1009px;" width="24" height="16" viewBox="0 0 24 16"><path d="M2 2.5 L12 12.5 L22 2.5" fill="none" stroke="#111" stroke-width="2.4" stroke-linecap="round" stroke-linejoin="round"/></svg><svg style="left:866px;top:1009px;" width="24" height="16" viewBox="0 0 24 16"><path d="M2 2.5 L12 12.5 L22 2.5" fill="none" stroke="#111" stroke-width="2.4" stroke-linecap="round" stroke-linejoin="round"/></svg><svg style="left:1086px;top:1009px;" width="24" height="16" viewBox="0 0 24 16"><path d="M2 2.5 L12 12.5 L22 2.5" fill="none" stroke="#111" stroke-width="2.4" stroke-linecap="round" stroke-linejoin="round"/></svg><div style="left:275.12px;top:1054.22px;font-size:34px;line-height:34px;font-weight:400;color:#000;white-space:pre;letter-spacing:0.006px;">1/1/2024</div><div style="left:523.22px;top:1054.22px;font-size:34px;line-height:34px;font-weight:400;color:#000;white-space:pre;letter-spacing:-0.080px;">18,384</div><div style="left:834.22px;top:1054.22px;font-size:34px;line-height:34px;font-weight:400;color:#000;white-space:pre;letter-spacing:1.985px;">442</div><div style="left:1033.00px;top:1054.22px;font-size:34px;line-height:34px;font-weight:400;color:#000;white-space:pre;letter-spacing:1.201px;">2.4%</div><div style="left:271.30px;top:1109.52px;font-size:34px;line-height:34px;font-weight:400;color:#000;white-space:pre;letter-spacing:0.551px;">2/1/2024</div><div style="left:521.32px;top:1109.52px;font-size:34px;line-height:34px;font-weight:400;color:#000;white-space:pre;letter-spacing:0.522px;">18,449</div><div style="left:875.76px;top:1109.52px;font-size:34px;line-height:34px;font-weight:400;color:#000;white-space:pre;letter-spacing:0.000px;">3</div><div style="left:1034.37px;top:1109.52px;font-size:34px;line-height:34px;font-weight:400;color:#000;white-space:pre;letter-spacing:0.743px;">0.0%</div><div style="left:197px;top:824px;width:1446px;height:341px;overflow:hidden"><div style="position:absolute;left:1px;top:22px;width:627px;height:123px;box-shadow:0 12px 24px -4px rgba(0,0,0,0.32)"></div><div style="position:absolute;left:659px;top:22px;width:625px;height:120px;box-shadow:0 12px 24px -4px rgba(0,0,0,0.32)"></div></div><div style="left:197.5px;top:845.5px;width:627.5px;height:124px;background:#fff;border:2.5px solid #a3a3a3;border-left:none;box-sizing:border-box"></div><svg style="left:238.5px;top:896.5px;" width="35" height="23" viewBox="0 0 35 23"><g fill="#000"><rect x="0" y="0" width="34.5" height="4"/><rect x="6" y="9.5" width="22.5" height="4"/><rect x="12.5" y="19" width="9.5" height="4"/></g></svg><div style="left:298.15px;top:890.82px;font-size:34px;line-height:34px;font-weight:700;color:#000;white-space:pre;letter-spacing:-0.800px;">Airline</div><div style="left:581.97px;top:892.31px;font-size:32px;line-height:32px;font-weight:400;color:#9e9e9e;white-space:pre;letter-spacing:0.114px;-webkit-text-stroke:0.9px #9e9e9e;">1 selected</div><svg style="left:748px;top:902px;" width="20" height="14" viewBox="0 0 20 14"><path d="M2 2.5 L10 10.5 L18 2.5" fill="none" stroke="#9e9e9e" stroke-width="2.8" stroke-linecap="round" stroke-linejoin="round"/></svg><div style="left:856px;top:846px;width:625px;height:120px;background:#fff;border:5px solid #1f8596;box-sizing:border-box"></div><div style="left:846px;top:891px;width:25px;height:25px;background:#fff"></div><div style="left:848px;top:893px;width:21px;height:21px;background:#1f8596"></div><div style="left:1466px;top:891px;width:25px;height:25px;background:#fff"></div><div style="left:1468px;top:893px;width:21px;height:21px;background:#1f8596"></div><svg style="left:896.5px;top:894px;" width="35" height="23" viewBox="0 0 35 23"><g fill="#000"><rect x="0" y="0" width="34.5" height="4"/><rect x="6" y="9.5" width="22.5" height="4"/><rect x="12.5" y="19" width="9.5" height="4"/></g></svg><div style="left:955.45px;top:888.32px;font-size:34px;line-height:34px;font-weight:700;color:#000;white-space:pre;letter-spacing:-0.511px;">Airport</div><div style="left:1239.57px;top:890.01px;font-size:32px;line-height:32px;font-weight:400;color:#9e9e9e;white-space:pre;letter-spacing:0.069px;-webkit-text-stroke:0.9px #9e9e9e;">1 selected</div><svg style="left:1406px;top:900px;" width="20" height="14" viewBox="0 0 20 14"><path d="M2 2.5 L10 10.5 L18 2.5" fill="none" stroke="#9e9e9e" stroke-width="2.8" stroke-linecap="round" stroke-linejoin="round"/></svg><div style="left:1643px;top:330px;width:36px;height:835px;background:#fafafa"></div><div style="left:1643px;top:330px;width:1px;height:835px;background:#e3e3e3"></div><div style="left:1643px;top:361px;width:36px;height:1.5px;background:#e6e6e6"></div><div style="left:1643px;top:1130px;width:36px;height:1.5px;background:#e6e6e6"></div><svg style="left:1652px;top:335px;" width="20" height="17" viewBox="0 0 20 17"><path d="M1.5 15.5 L10 1 L18.5 15.5Z" fill="#c8c8c8"/></svg><svg style="left:1652px;top:1140px;" width="20" height="17" viewBox="0 0 20 17"><path d="M1.5 1 L10 15.5 L18.5 1Z" fill="#c8c8c8"/></svg><div style="left:1650.5px;top:368.5px;width:22.5px;height:99px;background:#c2c2c2;border-radius:11.5px"></div><div style="left:197px;top:1165px;width:1482px;height:35px;background:#fafafa"></div><div style="left:197px;top:1164px;width:1482px;height:2px;background:#dcdcdc"></div><div style="left:231px;top:1166px;width:1.5px;height:34px;background:#e6e6e6"></div><div style="left:1609px;top:1166px;width:1.5px;height:34px;background:#e6e6e6"></div><div style="left:1643px;top:1166px;width:1.5px;height:34px;background:#e6e6e6"></div><svg style="left:204px;top:1172px;" width="20" height="21" viewBox="0 0 20 21"><path d="M17 1.5 L2 10.5 L17 19.5Z" fill="#c8c8c8"/></svg><svg style="left:1618px;top:1172px;" width="20" height="21" viewBox="0 0 20 21"><path d="M2.5 1.5 L17.5 10.5 L2.5 19.5Z" fill="#c8c8c8"/></svg><div style="left:238.5px;top:1171.5px;width:532px;height:22.5px;background:#c2c2c2;border-radius:11.5px"></div><div style="left:0px;top:1199px;width:1679px;height:97px;background:#fafafa"></div><div style="left:0px;top:1199px;width:1679px;height:2px;background:#d6d6d6"></div><div style="left:43px;top:1249px;width:30px;height:4px;background:#222"></div><div style="left:56px;top:1236px;width:4px;height:30px;background:#222"></div><div style="left:149px;top:1239.5px;width:38px;height:4px;background:#222"></div><div style="left:149px;top:1249.5px;width:38px;height:4px;background:#222"></div><div style="left:149px;top:1259.5px;width:38px;height:4px;background:#222"></div><div style="left:223px;top:1213px;width:250px;height:74px;background:#e3e3e3;border-radius:7px"></div><div style="left:261.83px;top:1232.87px;font-size:35px;line-height:35px;font-weight:400;color:#111;white-space:pre;letter-spacing:-0.014px;">Dashboard</div><div style="left:1166.60px;top:1217.30px;font-size:28px;line-height:28px;font-weight:400;color:#333;white-space:pre;letter-spacing:1.116px;">Count</div><div style="left:1132.60px;top:1255.60px;font-size:28px;line-height:28px;font-weight:400;color:#333;white-space:pre;letter-spacing:1.887px;">244,991</div><div style="left:1287.38px;top:1217.30px;font-size:28px;line-height:28px;font-weight:400;color:#333;white-space:pre;letter-spacing:0.903px;">Table Updated</div><div style="left:1276.37px;top:1255.60px;font-size:28px;line-height:28px;font-weight:400;color:#333;white-space:pre;letter-spacing:0.795px;">18 minutes ago</div><div style="left:1508.08px;top:1217.30px;font-size:28px;line-height:28px;font-weight:400;color:#333;white-space:pre;letter-spacing:0.599px;">Table Rows</div><div style="left:1543.60px;top:1255.60px;font-size:28px;line-height:28px;font-weight:400;color:#333;white-space:pre;letter-spacing:2.212px;">244,990</div><div style="left:1679px;top:188px;width:875px;height:1108px;background:#fff"></div><div style="left:1678px;top:188px;width:5px;height:1108px;background:#dcdcdc"></div><div style="left:1742.62px;top:247.69px;font-size:41px;line-height:41px;font-weight:700;color:#000;white-space:pre;letter-spacing:0.038px;">Configure slicer</div><svg style="left:2460px;top:250px;" width="36" height="36" viewBox="0 0 36 36"><path d="M4.5 4.7 L31.4 31 M31.4 4.7 L4.5 31" fill="none" stroke="#111" stroke-width="2.8" stroke-linecap="round"/></svg><div style="left:1742.77px;top:353.52px;font-size:34px;line-height:34px;font-weight:400;color:#111;white-space:pre;letter-spacing:0.634px;">Slicer title</div><div style="left:1744px;top:404px;width:754px;height:84px;background:#fafafa;border:2px solid #dcdcdc;border-radius:7px;box-sizing:border-box"></div><div style="left:1767.24px;top:430.06px;font-size:31px;line-height:31px;font-weight:400;color:#111;white-space:pre;letter-spacing:0.776px;">Airport</div><div style="left:1742.77px;top:533.52px;font-size:34px;line-height:34px;font-weight:400;color:#111;white-space:pre;letter-spacing:0.577px;">Sliced columns</div><div style="left:1742.13px;top:593.41px;font-size:32px;line-height:32px;font-weight:400;color:#6b6b6b;white-space:pre;letter-spacing:-0.129px;-webkit-text-stroke:0.9px #6b6b6b;">Dashboard!A1</div><div style="left:1743.5px;top:636.5px;width:754.5px;height:84px;background:#fcfcfc;border:2px solid #ececec;border-radius:7px;box-sizing:border-box"></div><div style="left:1743.5px;top:636.5px;width:85px;height:84px;background:#fafafa;border:2px solid #a3a3a3;border-radius:8px;box-sizing:border-box;box-shadow:0 4px 10px rgba(0,0,0,0.12)"></div><svg style="left:1766px;top:658px;" width="40" height="40" viewBox="0 0 40 40"><g fill="none" stroke="#000" stroke-width="2.6" stroke-linecap="round"><circle cx="20" cy="20" r="12.8"/><path d="M20 2.5 V11 M20 29 V37.5 M2.8 20 H11.5 M28.5 20 H37.3"/></g></svg><div style="left:1847.99px;top:663.61px;font-size:30px;line-height:30px;font-weight:400;color:#888;white-space:pre;letter-spacing:-0.362px;">ORIGIN</div><svg style="left:2458px;top:670px;" width="26" height="16" viewBox="0 0 26 16"><path d="M3 3 L12.5 12.5 L22 3" fill="none" stroke="#bbb" stroke-width="2.8" stroke-linecap="round" stroke-linejoin="round"/></svg><svg style="left:1688px;top:672px;" width="90" height="44" viewBox="0 0 90 44"><path d="M6 39 L58 21" stroke="#e21d1d" stroke-width="5.5" stroke-linecap="butt"/><path d="M84.5 12.5 L51.5 8.5 L60.5 35.5Z" fill="#e21d1d"/></svg>
</body></html>
